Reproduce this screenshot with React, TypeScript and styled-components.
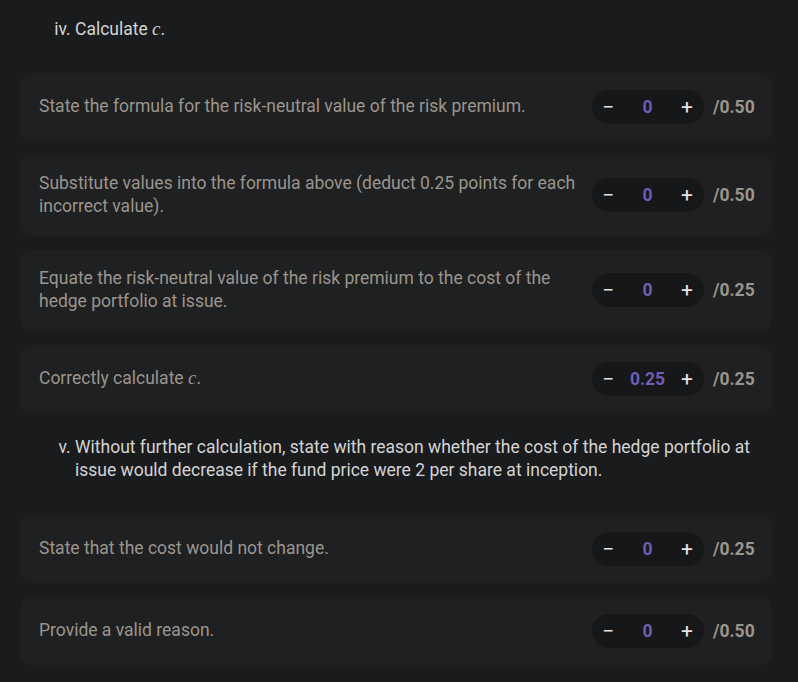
import React from "react";
import styled, { createGlobalStyle } from "styled-components";

const Global = createGlobalStyle`
  html, body { margin: 0; padding: 0; background: #1a1b1d; }
  body { font-family: Roboto, "Noto Sans", sans-serif; -webkit-font-smoothing: antialiased; }
`;

const Page = styled.div`
  padding: 17px 26px 16px 20px;
  width: 798px;
  box-sizing: border-box;
  background: #1a1b1d;
  min-height: 682px;
`;

const QuestionList = styled.ol`
  margin: 0;
  padding: 0 0 0 55px;
  list-style-type: lower-roman;
`;

const Question = styled.li<{ $gap: number }>`
  color: #d4d4d4;
  font-size: 17.5px;
  line-height: 23.5px;
  margin: 0 -26px ${(p) => p.$gap}px 0;
  padding-right: 20px;
  &::marker { color: #d4d4d4; }
`;

const Var = styled.span`
  font-family: "Liberation Serif", "DejaVu Serif", serif;
  font-style: italic;
  font-size: 19px;
`;

const Cards = styled.div`
  display: flex;
  flex-direction: column;
  gap: 14px;
  margin-bottom: 23px;
`;

const Card = styled.div`
  display: flex;
  align-items: center;
  gap: 14px;
  background: #1f2022;
  border-radius: 12px;
  padding: 17px 15px 17px 19px;
`;

const Criterion = styled.div`
  flex: 1;
  color: #9b958d;
  font-size: 17.5px;
  line-height: 23.5px;
`;

const Stepper = styled.div`
  display: flex;
  align-items: center;
  justify-content: space-between;
  width: 112px;
  height: 34px;
  border-radius: 17px;
  background: #161718;
  box-sizing: border-box;
  padding: 0 7px 0 6px;
  flex-shrink: 0;
`;

const StepButton = styled.span`
  width: 20px;
  text-align: center;
  color: #e4e4e4;
  font-size: 21px;
  font-weight: 400;
  line-height: 20px;
`;

const Value = styled.span`
  color: #6d5db4;
  font-size: 17.5px;
  font-weight: 700;
`;

const Max = styled.span`
  color: #9b958d;
  font-size: 17.5px;
  font-weight: 700;
  width: 44px;
  flex-shrink: 0;
  margin-left: -5px;
`;

type Item = { text: React.ReactNode; value: string; max: string };

const Row = ({ text, value, max }: Item) => (
  <Card>
    <Criterion>{text}</Criterion>
    <Stepper>
      <StepButton>−</StepButton>
      <Value>{value}</Value>
      <StepButton>+</StepButton>
    </Stepper>
    <Max>/{max}</Max>
  </Card>
);

const partIV: Item[] = [
  { text: "State the formula for the risk-neutral value of the risk premium.", value: "0", max: "0.50" },
  { text: "Substitute values into the formula above (deduct 0.25 points for each incorrect value).", value: "0", max: "0.50" },
  { text: "Equate the risk-neutral value of the risk premium to the cost of the hedge portfolio at issue.", value: "0", max: "0.25" },
  { text: <>Correctly calculate <Var>c</Var>.</>, value: "0.25", max: "0.25" },
];

const partV: Item[] = [
  { text: "State that the cost would not change.", value: "0", max: "0.25" },
  { text: "Provide a valid reason.", value: "0", max: "0.50" },
];

export default function App() {
  return (
    <>
      <Global />
      <Page>
        <QuestionList start={4}>
          <Question $gap={31}>
            Calculate <Var>c</Var>.
          </Question>
        </QuestionList>
        <Cards>
          {partIV.map((it, i) => (
            <Row key={i} {...it} />
          ))}
        </Cards>
        <QuestionList start={5}>
          <Question $gap={32}>
            Without further calculation, state with reason whether the cost of the hedge portfolio at issue would decrease if the fund price were 2 per share at inception.
          </Question>
        </QuestionList>
        <Cards>
          {partV.map((it, i) => (
            <Row key={i} {...it} />
          ))}
        </Cards>
      </Page>
    </>
  );
}
